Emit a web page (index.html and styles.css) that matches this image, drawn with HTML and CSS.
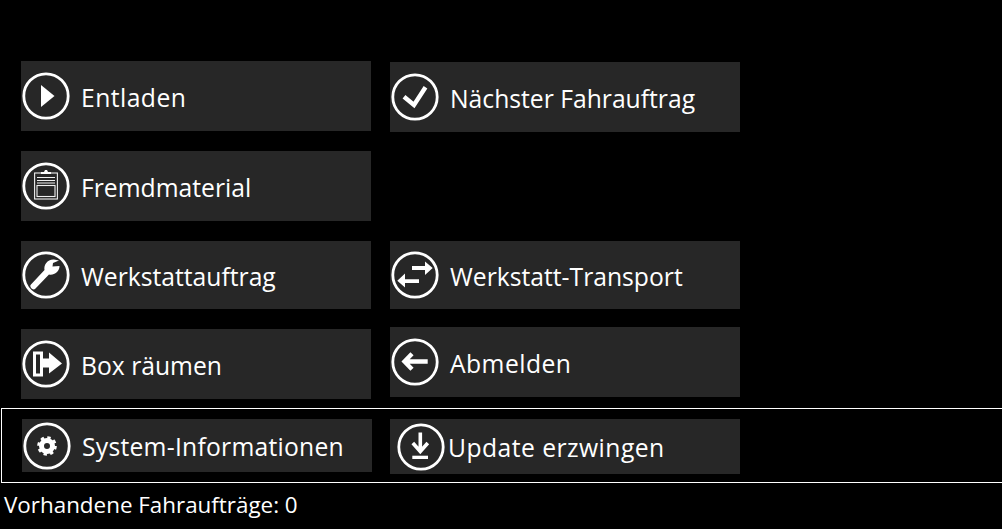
FILE: index.html
```html
<!DOCTYPE html>
<html lang="de">
<head>
<meta charset="utf-8">
<title>Fahrauftrag</title>
<link rel="stylesheet" href="styles.css">
</head>
<body>
<main class="page">
  <section class="upper">
    <div class="col col-left">
      <button class="btn h70"><svg class="icon" viewBox="0 0 48 48"><circle class="ring" cx="24" cy="24" r="22.2"/><polygon class="fill" points="19,13 32.5,24 19,35"/></svg><span class="track-wide">Entladen</span></button>
      <button class="btn h70"><svg class="icon" viewBox="0 0 48 48"><circle class="ring" cx="24" cy="24" r="22.2"/><rect class="thin" x="12.6" y="11" width="22.8" height="26"/><path class="fill" d="M19 12v-2h3l1-2h2l1 2h3v2z"/><path class="thin" d="M15 15.5h18M15 18.5h18M15 21h18"/><rect class="thin" x="15" y="23.5" width="18" height="11"/></svg><span>Fremdmaterial</span></button>
      <button class="btn h68"><svg class="icon" viewBox="0 0 48 48"><circle class="ring" cx="24" cy="24" r="22.2"/><path class="fill" d="M8.500 34 22.500 19C21.500 14 25.500 8 32 8.500L37 9.500 31 12 30.500 15.500 37.500 15C37.500 21 32 24.500 27 23.500L13 38C11 39.500 7.500 36.500 8.500 34Z"/></svg><span>Werkstattauftrag</span></button>
      <button class="btn h70"><svg class="icon" viewBox="0 0 48 48"><circle class="ring" cx="24" cy="24" r="22.2"/><rect class="wide" x="12.500" y="13" width="7" height="22"/><polygon class="fill" points="21,18.500 27,18.500 27,12.500 40,23.500 27,33.500 27,27.500 21,27.500"/></svg><span>Box räumen</span></button>
    </div>
    <div class="col col-right">
      <button class="btn h70"><svg class="icon" viewBox="0 0 48 48"><circle class="ring" cx="24" cy="24" r="22.2"/><path class="line heavy" d="M13 23.700 23 32 34.500 14.300"/></svg><span>Nächster Fahrauftrag</span></button>
      <div class="spacer"></div>
      <button class="btn h68"><svg class="icon" viewBox="0 0 48 48"><circle class="ring" cx="24" cy="24" r="22.200"/><path class="fill" d="M21 15h13v-4.500L41.700 17 34 24v-5H21zM28 28.300H14v-5.700L6.300 29.800 14 36.600V32h14z"/></svg><span>Werkstatt-Transport</span></button>
      <button class="btn h70"><svg class="icon" viewBox="0 0 48 48"><circle class="ring" cx="24" cy="24" r="22.200"/><path class="line heavy" d="M36.700 23.500H14M21 15.700 13.500 23.500 21 31.300"/></svg><span class="track-wide">Abmelden</span></button>
    </div>
  </section>
  <section class="framed">
    <button class="btn sys"><svg class="icon" viewBox="0 0 48 48"><circle class="ring" cx="24" cy="24" r="22.200"/><circle class="gear" cx="24" cy="24" r="5.500"/><circle class="teeth" cx="24" cy="24" r="8.500"/></svg><span class="track-slight">System-Informationen</span></button>
    <button class="btn update"><svg class="icon" viewBox="0 0 48 48"><circle class="ring" cx="24" cy="24" r="22.200"/><path class="line" d="M23.300 9.500V28M15.800 20 23.300 28.500 30.800 20"/><rect class="fill" x="15.300" y="32.700" width="15.700" height="3.300"/></svg><span class="track-wide">Update erzwingen</span></button>
  </section>
  <p class="status">Vorhandene Fahraufträge: 0</p>
</main>
</body>
</html>
```

FILE: styles.css
```css
html, body {
  margin: 0;
  height: 100%;
  background: #000;
  overflow: hidden;
}

.page {
  width: 1002px;
  height: 529px;
  color: #fff;
  font-family: "Open Sans", "Noto Sans", sans-serif;
}

.upper {
  display: flex;
  gap: 19px;
  padding: 61px 0 0 21px;
  height: 408px;
  box-sizing: border-box;
}

.col {
  display: flex;
  flex-direction: column;
  width: 350px;
}

.col-left { gap: 20px; }

.col-right {
  margin-top: 1px;
  gap: 18px;
}

.spacer { height: 73px; flex: none; }

.btn {
  display: flex;
  flex: none;
  align-items: center;
  width: 350px;
  padding: 0 0 0 1px;
  border: 0;
  background: #272727;
  color: #fff;
  font: inherit;
  font-size: 24.7px;
  text-align: left;
}

.btn span {
  margin: 2px 0 0 11px;
  white-space: nowrap;
}

.track-wide { letter-spacing: 0.45px; }
.track-slight { letter-spacing: 0.25px; }

.h70 { height: 70px; }
.h68 { height: 68px; }

.icon {
  flex: none;
  width: 48px;
  height: 48px;
}

.ring {
  fill: none;
  stroke: #fff;
  stroke-width: 2.8;
}

.fill { fill: #fff; }

.thin {
  fill: none;
  stroke: #f0f0f0;
  stroke-width: 1.1;
}

.wide {
  fill: none;
  stroke: #fff;
  stroke-width: 3;
}

.line {
  fill: none;
  stroke: #fff;
  stroke-width: 3.6;
}

.heavy { stroke-width: 4.4; }

.gear {
  fill: none;
  stroke: #fff;
  stroke-width: 5;
}

.teeth {
  fill: none;
  stroke: #fff;
  stroke-width: 2.6;
  stroke-dasharray: 3.34 3.34;
}

.framed {
  display: flex;
  align-items: flex-start;
  gap: 18px;
  height: 75px;
  box-sizing: border-box;
  margin-left: 1px;
  padding: 10px 0 0 20px;
  border: 1px solid #fff;
  border-right: 0;
}

.sys { height: 53px; }
.update { height: 55px; padding-left: 7px; }
.btn.update span { margin-left: 3px; }

.status {
  margin: 7px 0 0 4px;
  font-size: 22.4px;
  line-height: 30px;
}
```
